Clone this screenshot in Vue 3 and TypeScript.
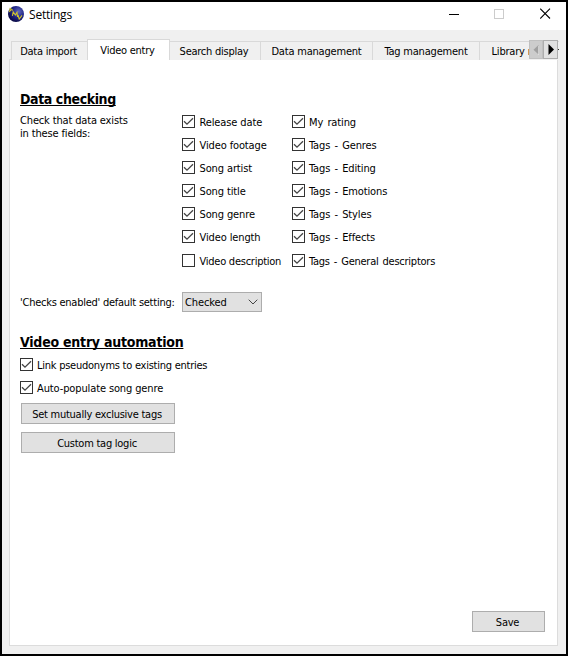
<script setup lang="ts">
import { ref, reactive } from 'vue'

interface Tab { label: string; width: number }
interface Field { label: string; checked: boolean; tight?: boolean }

const tabs: Tab[] = [
  { label: 'Data import', width: 77 },
  { label: 'Video entry', width: 83 },
  { label: 'Search display', width: 92 },
  { label: 'Data management', width: 113 },
  { label: 'Tag management', width: 108 },
  { label: 'Library merging', width: 101 },
]
const active = ref(1)

const videoFields = reactive<Field[]>([
  { label: 'Release date', checked: true },
  { label: 'Video footage', checked: true },
  { label: 'Song artist', checked: true },
  { label: 'Song title', checked: true },
  { label: 'Song genre', checked: true },
  { label: 'Video length', checked: true },
  { label: 'Video description', checked: false, tight: true },
])
const tagFields = reactive<Field[]>([
  { label: 'My rating', checked: true },
  { label: 'Tags - Genres', checked: true },
  { label: 'Tags - Editing', checked: true },
  { label: 'Tags - Emotions', checked: true },
  { label: 'Tags - Styles', checked: true },
  { label: 'Tags - Effects', checked: true },
  { label: 'Tags - General descriptors', checked: true, tight: true },
])
const automation = reactive<Field[]>([
  { label: 'Link pseudonyms to existing entries', checked: true, tight: true },
  { label: 'Auto-populate song genre', checked: true },
])
</script>

<template>
  <div class="window">
    <header class="titlebar">
      <svg class="logo" width="16" height="16" viewBox="0 0 16 16">
        <defs>
          <radialGradient id="orb" cx="0.66" cy="0.34" r="0.7">
            <stop offset="0" stop-color="#5f68ba" />
            <stop offset="0.5" stop-color="#23298a" />
            <stop offset="1" stop-color="#090944" />
          </radialGradient>
        </defs>
        <circle cx="8" cy="8" r="8" fill="url(#orb)" />
        <path d="M1.6 6.2 2.2 2.4 5 4.4M2 4.9 3.8 3.6M4.4 9.8 5.2 5.8 7.3 9 9 6.4 9.5 11M10 9 11.2 13 14 9.4" fill="none" stroke="#d2c52c" stroke-width="1.1" />
      </svg>
      <span class="title">Settings</span>
      <div class="controls">
        <svg class="minimise" width="11" height="11" viewBox="0 0 11 11"><path d="M0 6.5H10" stroke="#000" /></svg>
        <svg width="11" height="11" viewBox="0 0 11 11"><rect x="0.5" y="1.5" width="9" height="9" fill="none" stroke="#ccc" /></svg>
        <svg width="11" height="11" viewBox="0 0 11 11"><path d="M0.2 0.7 10 10.5M10 0.7 0.2 10.5" stroke="#000" stroke-width="1.1" /></svg>
      </div>
    </header>

    <nav class="tabs">
      <button
        v-for="(tab, i) in tabs" :key="tab.label" class="tab" :class="{ active: i === active }"
        :style="{ width: tab.width + 'px' }" @click="active = i"
      >{{ tab.label }}</button>
      <div class="scroller">
        <button class="scroll disabled"><svg width="7" height="10" viewBox="0 0 7 10"><path d="M6 1V10L5 9V1Z" fill="#fff" /><path d="M5.5 0V9.5L0.5 4.75Z" fill="#a0a0a0" /></svg></button>
        <button class="scroll"><svg width="6" height="11" viewBox="0 0 6 11"><path d="M0.5 0V11L6 5.5Z" fill="#000" /></svg></button>
      </div>
    </nav>

    <main class="pane">
      <h2>Data checking</h2>
      <section class="fields">
        <p class="hint">Check that data exists<br>in these fields:</p>
        <div v-for="(group, g) in [videoFields, tagFields]" :key="g" class="column">
          <label v-for="f in group" :key="f.label" class="check">
            <span class="box" @click="f.checked = !f.checked">
              <svg v-if="f.checked" width="11" height="11" viewBox="0 0 11 11"><path d="M1 5.2 4 8.2 10 2.2" /></svg>
            </span>
            <span class="text" :class="{ tight: f.tight }">{{ f.label }}</span>
          </label>
        </div>
      </section>

      <section class="default">
        <span class="caption">'Checks enabled' default setting:</span>
        <div class="select">
          <span>Checked</span>
          <svg width="10" height="6" viewBox="0 0 10 6"><path d="M0.7 0.7 5 5 9.3 0.7" fill="none" stroke="#444" /></svg>
        </div>
      </section>

      <h2 class="long">Video entry automation</h2>
      <section class="automation">
        <label v-for="f in automation" :key="f.label" class="check">
          <span class="box" @click="f.checked = !f.checked">
            <svg v-if="f.checked" width="11" height="11" viewBox="0 0 11 11"><path d="M1 5.2 4 8.2 10 2.2" /></svg>
          </span>
          <span class="text" :class="{ tight: f.tight }">{{ f.label }}</span>
        </label>
      </section>
      <div class="actions">
        <button class="btn">Set mutually exclusive tags</button>
        <button class="btn">Custom tag logic</button>
      </div>
      <button class="btn save">Save</button>
    </main>
  </div>
</template>

<style scoped>
.window {
  box-sizing: border-box;
  width: 568px;
  height: 656px;
  border: 2px solid #000;
  background: #f0f0f0;
  color: #000;
  display: flex;
  flex-direction: column;
  overflow: hidden;
  font: 11px/13px "DejaVu Sans Condensed", "DejaVu Sans", sans-serif;
  font-stretch: condensed;
  letter-spacing: -0.25px;
}
button { font: inherit; letter-spacing: inherit; color: inherit; padding: 0; margin: 0; }
svg { display: block; flex: none; }
.titlebar {
  height: 28px;
  flex: none;
  background: #fff;
  display: flex;
  align-items: flex-start;
  padding: 0 15px 0 6px;
}
.logo { margin-top: 4px; }
.title {
  font: 12px/16px "Open Sans", "Noto Sans", sans-serif;
  letter-spacing: -0.2px;
  margin: 5px 0 0 5px;
}
.controls { margin: 6px 0 0 auto; display: flex; gap: 35px; }
.minimise { margin-right: -1px; }
.tabs {
  height: 30px;
  flex: none;
  box-sizing: border-box;
  padding: 11px 0 0 9px;
  margin-right: 7px;
  display: flex;
  position: relative;
  overflow: hidden;
}
.tab {
  flex: none;
  box-sizing: border-box;
  height: 19px;
  border: 1px solid #d9d9d9;
  border-bottom: 0;
  margin-right: -1px;
  background: #f0f0f0;
  white-space: nowrap;
  line-height: 16px;
  padding: 2px 2px 0 0;
}
.tab:nth-child(n + 4) { letter-spacing: -0.2px; padding-right: 0; }
.tab.active { background: #fff; height: 21px; margin-top: -2px; z-index: 1; line-height: 18px; }
.scroller { position: absolute; right: 1px; top: 10px; display: flex; z-index: 2; }
.scroll {
  box-sizing: border-box;
  width: 15px;
  height: 19px;
  border: 1px solid #adadad;
  background: #e1e1e1;
  display: grid;
  place-items: center;
}
.scroll.disabled { background: #ccc; border-color: #bfbfbf; width: 14px; }
.pane {
  flex: 1;
  box-sizing: border-box;
  margin: -1px 8px 8px 7px;
  border: 1px solid #dcdcdc;
  background: #fff;
  padding: 31px 12px 13px 10px;
  display: flex;
  flex-direction: column;
}
h2 {
  margin: 0;
  padding-bottom: 2px;
  font-size: 14px;
  line-height: 16px;
  font-weight: bold;
  letter-spacing: -0.4px;
  text-decoration: underline 1px;
  text-underline-offset: 1px;
  text-decoration-skip-ink: none;
}
h2.long { letter-spacing: -0.23px; }
.fields { display: flex; margin-top: 5px; }
.hint { margin: 0; width: 162px; letter-spacing: -0.15px; }
.column { width: 110px; padding-top: 1px; }
.column + .column { width: 160px; }
.column + .column .text { word-spacing: 1.2px; }
.check { display: flex; align-items: center; height: 13px; margin-bottom: 10px; white-space: nowrap; }
.column .check:last-child { margin: 11px 0 0; }
.text { padding-top: 2px; letter-spacing: -0.12px; }
.text.tight { letter-spacing: -0.25px; }
.box {
  box-sizing: border-box;
  width: 13px;
  height: 13px;
  border: 1px solid #333;
  margin-right: 4px;
}
.column:nth-child(2) .box { margin-right: 4.5px; }
.box path { fill: none; stroke: #444; stroke-width: 1.3; }
.default { display: flex; align-items: center; margin-top: 25px; height: 20px; }
.caption { width: 162px; white-space: nowrap; padding-top: 1px; }
.select {
  box-sizing: border-box;
  width: 80px;
  height: 20px;
  border: 1px solid #adadad;
  background: #e1e1e1;
  display: flex;
  align-items: center;
  justify-content: space-between;
  padding: 0 3px 0 2px;
}
.select span { padding-top: 1px; letter-spacing: -0.1px; }
.default + h2 { margin-top: 22px; }
.automation { margin-top: 6px; }
.actions { display: flex; flex-direction: column; gap: 8px; margin: -1px 0 0 1px; }
.btn {
  box-sizing: border-box;
  width: 154px;
  height: 21px;
  border: 1px solid #adadad;
  background: #e1e1e1;
  padding: 2px 2px 0 0;
}
.btn.save { width: 73px; margin: auto 0 0 auto; }
</style>
